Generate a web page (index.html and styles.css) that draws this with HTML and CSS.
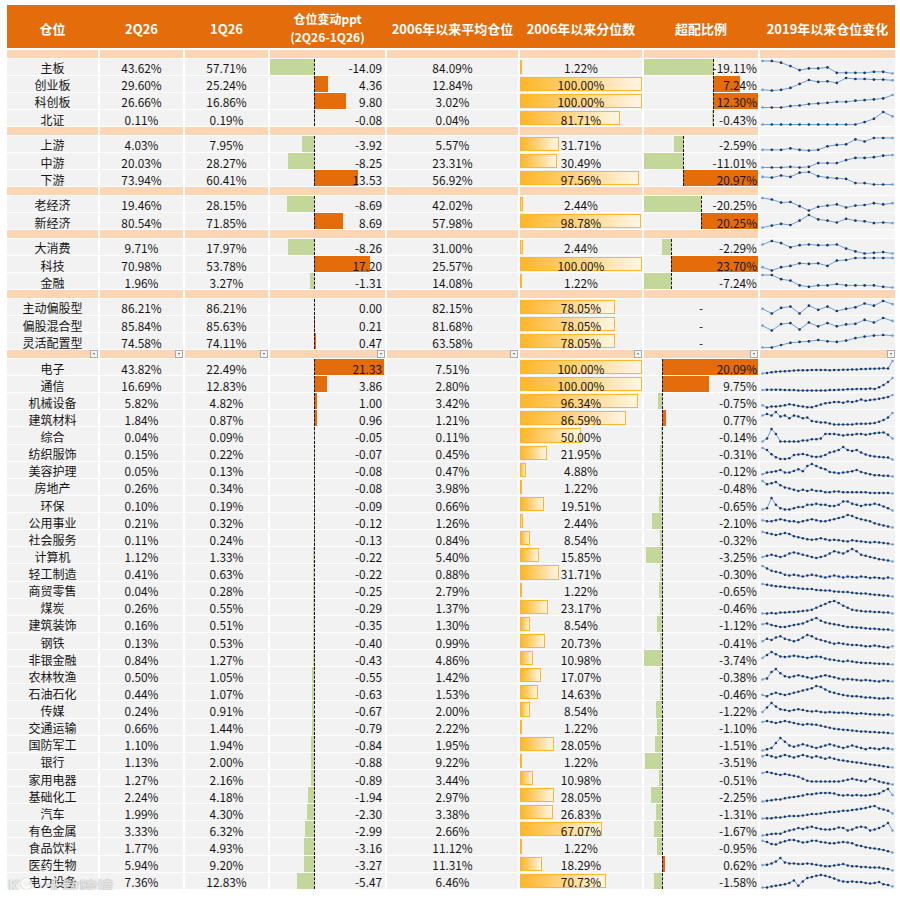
FILE: index.html
```html
<!DOCTYPE html>
<html lang="zh-CN">
<head>
<meta charset="utf-8">
<title>仓位</title>
<link rel="stylesheet" href="styles.css">
</head>
<body>
<div class="sheet">
  <div class="head">
    <div class="h">仓位</div>
    <div class="h">2Q26</div>
    <div class="h">1Q26</div>
    <div class="h two"><span>仓位变动ppt</span><span>(2Q26-1Q26)</span></div>
    <div class="h">2006年以来平均仓位</div>
    <div class="h">2006年以来分位数</div>
    <div class="h">超配比例</div>
    <div class="h">2019年以来仓位变化</div>
  </div>

  <div class="band"><div></div><div></div><div></div><div></div><div></div><div></div><div></div><div></div></div>
  <div class="grp">
    <div class="row"><div class="c nm">主板</div><div class="c">43.62%</div><div class="c">57.71%</div><div class="c chg"><span>-14.09</span></div><div class="c">84.09%</div><div class="c pct"><span>1.22%</span></div><div class="c ow"><span>-19.11%</span></div><div class="c sp" data-v="42,42,37,27,15,20,20,23,7,7,7,7,10,10,5"></div></div>
    <div class="row"><div class="c nm">创业板</div><div class="c">29.60%</div><div class="c">25.24%</div><div class="c chg"><span>4.36</span></div><div class="c">12.84%</div><div class="c pct"><span>100.00%</span></div><div class="c ow"><span>7.24%</span></div><div class="c sp" data-v="7,5,7,13,25,37,31,33,28,43,40,40,38,38,36"></div></div>
    <div class="row"><div class="c nm">科创板</div><div class="c">26.66%</div><div class="c">16.86%</div><div class="c chg"><span>9.80</span></div><div class="c">3.02%</div><div class="c pct"><span>100.00%</span></div><div class="c ow"><span>12.30%</span></div><div class="c sp" data-v="8,8,8,12,14,18,20,22,25,25,28,30,32,35,45"></div></div>
    <div class="row"><div class="c nm">北证</div><div class="c">0.11%</div><div class="c">0.19%</div><div class="c chg"><span>-0.08</span></div><div class="c">0.04%</div><div class="c pct"><span>81.71%</span></div><div class="c ow"><span>-0.43%</span></div><div class="c sp" data-v="0,0,0,0,0,0,0,0,0,0,0,7,17,37,24"></div></div>
  </div>

  <div class="band"><div></div><div></div><div></div><div></div><div></div><div></div><div></div><div class="lt"></div></div>
  <div class="grp">
    <div class="row"><div class="c nm">上游</div><div class="c">4.03%</div><div class="c">7.95%</div><div class="c chg"><span>-3.92</span></div><div class="c">5.57%</div><div class="c pct"><span>31.71%</span></div><div class="c ow"><span>-2.59%</span></div><div class="c sp" data-v="0,0,0,1,0,-0.5,0,2.5,3.5,4,7.5,6,8.5,8.5,8.5"></div></div>
    <div class="row"><div class="c nm">中游</div><div class="c">20.03%</div><div class="c">28.27%</div><div class="c chg"><span>-8.25</span></div><div class="c">23.31%</div><div class="c pct"><span>30.49%</span></div><div class="c ow"><span>-11.01%</span></div><div class="c sp" data-v="0,0,0,0.5,0,0.5,3,3,3,5,6.5,6.5,7,8,8.5"></div></div>
    <div class="row"><div class="c nm">下游</div><div class="c">73.94%</div><div class="c">60.41%</div><div class="c chg"><span>13.53</span></div><div class="c">56.92%</div><div class="c pct"><span>97.56%</span></div><div class="c ow"><span>20.97%</span></div><div class="c sp" data-v="7,6.5,8,7,10,10.5,7.5,6.5,6,5.5,2.5,2.5,1.5,1.5,1.5"></div></div>
  </div>

  <div class="band"><div></div><div></div><div></div><div></div><div></div><div></div><div></div><div class="lt"></div></div>
  <div class="grp">
    <div class="row"><div class="c nm">老经济</div><div class="c">19.46%</div><div class="c">28.15%</div><div class="c chg"><span>-8.69</span></div><div class="c">42.02%</div><div class="c pct"><span>2.44%</span></div><div class="c ow"><span>-20.25%</span></div><div class="c sp" data-v="47,42,32,34,20,6,18,22,26,16,22,24,30,26,30"></div></div>
    <div class="row"><div class="c nm">新经济</div><div class="c">80.54%</div><div class="c">71.85%</div><div class="c chg"><span>8.69</span></div><div class="c">57.98%</div><div class="c pct"><span>98.78%</span></div><div class="c ow"><span>20.25%</span></div><div class="c sp" data-v="2,8,14,10,24,42,28,24,18,30,24,22,16,18,16"></div></div>
  </div>

  <div class="band"><div></div><div></div><div></div><div></div><div></div><div></div><div></div><div class="lt"></div></div>
  <div class="grp">
    <div class="row"><div class="c nm">大消费</div><div class="c">9.71%</div><div class="c">17.97%</div><div class="c chg"><span>-8.26</span></div><div class="c">31.00%</div><div class="c pct"><span>2.44%</span></div><div class="c ow"><span>-2.29%</span></div><div class="c sp" data-v="28,38,32,20,26,28,26,26,28,16,8,2,4,6,2"></div></div>
    <div class="row"><div class="c nm">科技</div><div class="c">70.98%</div><div class="c">53.78%</div><div class="c chg"><span>17.20</span></div><div class="c">25.57%</div><div class="c pct"><span>100.00%</span></div><div class="c ow"><span>23.70%</span></div><div class="c sp" data-v="20,10,20,24,32,30,32,24,40,42,48,48,48,48,48"></div></div>
    <div class="row"><div class="c nm">金融</div><div class="c">1.96%</div><div class="c">3.27%</div><div class="c chg"><span>-1.31</span></div><div class="c">14.08%</div><div class="c pct"><span>1.22%</span></div><div class="c ow"><span>-7.24%</span></div><div class="c sp" data-v="36,36,24,20,6,2,6,6,10,6,6,6,6,2,0"></div></div>
  </div>

  <div class="band"><div></div><div></div><div></div><div></div><div></div><div></div><div></div><div></div></div>
  <div class="grp">
    <div class="row"><div class="c nm">主动偏股型</div><div class="c">86.21%</div><div class="c">86.21%</div><div class="c chg"><span>0.00</span></div><div class="c">82.15%</div><div class="c pct"><span>78.05%</span></div><div class="c ow dash"><span>-</span></div><div class="c sp" data-v="25,10,28,32,10,35,22,32,18,25,30,42,35,50,40"></div></div>
    <div class="row"><div class="c nm">偏股混合型</div><div class="c">85.84%</div><div class="c">85.63%</div><div class="c chg"><span>0.21</span></div><div class="c">81.68%</div><div class="c pct"><span>78.05%</span></div><div class="c ow dash"><span>-</span></div><div class="c sp" data-v="20,5,25,28,8,30,18,28,18,24,26,38,30,44,35"></div></div>
    <div class="row"><div class="c nm">灵活配置型</div><div class="c">74.58%</div><div class="c">74.11%</div><div class="c chg"><span>0.47</span></div><div class="c">63.58%</div><div class="c pct"><span>78.05%</span></div><div class="c ow dash"><span>-</span></div><div class="c sp" data-v="0,0,8,15,18,20,24,20,18,22,30,35,38,40,38"></div></div>
  </div>

  <div class="band dds"><div><b class="dd"></b></div><div><b class="dd"></b></div><div><b class="dd"></b></div><div><b class="dd"></b></div><div><b class="dd"></b></div><div><b class="dd"></b></div><div><b class="dd"></b></div><div><b class="dd"></b></div></div>
  <div class="grp">
    <div class="row"><div class="c nm">电子</div><div class="c">43.82%</div><div class="c">22.49%</div><div class="c chg"><span>21.33</span></div><div class="c">7.51%</div><div class="c pct"><span>100.00%</span></div><div class="c ow"><span>20.09%</span></div><div class="c sp" data-v="2,4,6,8,9,10,11,12,13,13,13,14,14,14,14,13,14,14,15,15,16,16,17,17,18,18,19,20,19,45"></div></div>
    <div class="row"><div class="c nm">通信</div><div class="c">16.69%</div><div class="c">12.83%</div><div class="c chg"><span>3.86</span></div><div class="c">2.80%</div><div class="c pct"><span>100.00%</span></div><div class="c ow"><span>9.75%</span></div><div class="c sp" data-v="5,6,6,6,6,5,5,5,4,4,4,4,4,4,4,5,5,6,6,7,7,8,8,8,9,8,12,18,25,35"></div></div>
    <div class="row"><div class="c nm">机械设备</div><div class="c">5.82%</div><div class="c">4.82%</div><div class="c chg"><span>1.00</span></div><div class="c">3.42%</div><div class="c pct"><span>96.34%</span></div><div class="c ow"><span>-0.75%</span></div><div class="c sp" data-v="12,5,8,8,10,12,15,13,10,8,6,6,10,14,18,20,22,22,20,24,22,25,30,26,28,30,32,35,38,44"></div></div>
    <div class="row"><div class="c nm">建筑材料</div><div class="c">1.84%</div><div class="c">0.87%</div><div class="c chg"><span>0.96</span></div><div class="c">1.21%</div><div class="c pct"><span>86.59%</span></div><div class="c ow"><span>0.77%</span></div><div class="c sp" data-v="28,32,28,38,25,28,20,28,25,20,22,12,10,8,8,5,2,2,2,2,2,4,4,4,5,6,10,15,22,35"></div></div>
    <div class="row"><div class="c nm">综合</div><div class="c">0.04%</div><div class="c">0.09%</div><div class="c chg"><span>-0.05</span></div><div class="c">0.11%</div><div class="c pct"><span>50.00%</span></div><div class="c ow"><span>-0.14%</span></div><div class="c sp" data-v="2,10,35,22,2,2,2,2,2,5,5,8,8,10,22,22,22,20,18,20,20,22,22,20,22,24,25,26,20,10"></div></div>
    <div class="row"><div class="c nm">纺织服饰</div><div class="c">0.15%</div><div class="c">0.22%</div><div class="c chg"><span>-0.07</span></div><div class="c">0.45%</div><div class="c pct"><span>21.95%</span></div><div class="c ow"><span>-0.31%</span></div><div class="c sp" data-v="40,33,20,10,5,5,7,17,19,21,17,13,11,13,17,25,29,33,43,33,30,33,25,19,15,13,11,10,9,3"></div></div>
    <div class="row"><div class="c nm">美容护理</div><div class="c">0.05%</div><div class="c">0.13%</div><div class="c chg"><span>-0.08</span></div><div class="c">0.47%</div><div class="c pct"><span>4.88%</span></div><div class="c ow"><span>-0.12%</span></div><div class="c sp" data-v="10,15,17,19,23,15,15,20,25,19,35,41,35,29,25,17,15,13,15,17,19,23,17,13,10,7,7,5,5,3"></div></div>
    <div class="row"><div class="c nm">房地产</div><div class="c">0.26%</div><div class="c">0.34%</div><div class="c chg"><span>-0.08</span></div><div class="c">3.98%</div><div class="c pct"><span>1.22%</span></div><div class="c ow"><span>-0.48%</span></div><div class="c sp" data-v="40,30,33,37,27,20,17,13,9,13,9,13,9,9,5,5,7,7,5,5,5,5,5,5,3,3,3,3,3,1"></div></div>
    <div class="row"><div class="c nm">环保</div><div class="c">0.10%</div><div class="c">0.19%</div><div class="c chg"><span>-0.09</span></div><div class="c">0.66%</div><div class="c pct"><span>19.51%</span></div><div class="c ow"><span>-0.65%</span></div><div class="c sp" data-v="10,12,30,18,12,10,10,12,14,14,18,18,20,18,18,16,16,18,24,24,20,18,16,18,18,20,18,15,12,8"></div></div>
    <div class="row"><div class="c nm">公用事业</div><div class="c">0.21%</div><div class="c">0.32%</div><div class="c chg"><span>-0.12</span></div><div class="c">1.26%</div><div class="c pct"><span>2.44%</span></div><div class="c ow"><span>-2.10%</span></div><div class="c sp" data-v="20,18,18,20,22,20,18,18,16,18,20,22,20,18,18,20,22,24,26,30,28,24,22,20,18,14,12,10,8,6"></div></div>
    <div class="row"><div class="c nm">社会服务</div><div class="c">0.11%</div><div class="c">0.24%</div><div class="c chg"><span>-0.13</span></div><div class="c">0.84%</div><div class="c pct"><span>8.54%</span></div><div class="c ow"><span>-0.32%</span></div><div class="c sp" data-v="30,28,26,24,26,28,26,22,20,18,16,15,16,18,16,14,15,14,13,12,14,13,12,11,10,11,10,9,8,6"></div></div>
    <div class="row"><div class="c nm">计算机</div><div class="c">1.12%</div><div class="c">1.33%</div><div class="c chg"><span>-0.22</span></div><div class="c">5.40%</div><div class="c pct"><span>15.85%</span></div><div class="c ow"><span>-3.25%</span></div><div class="c sp" data-v="20,22,24,22,20,22,26,28,26,24,22,20,18,20,22,26,30,28,26,30,34,30,24,22,20,18,16,15,14,12"></div></div>
    <div class="row"><div class="c nm">轻工制造</div><div class="c">0.41%</div><div class="c">0.63%</div><div class="c chg"><span>-0.22</span></div><div class="c">0.88%</div><div class="c pct"><span>31.71%</span></div><div class="c ow"><span>-0.30%</span></div><div class="c sp" data-v="40,35,30,28,26,22,20,22,20,18,20,22,20,18,16,18,20,18,16,18,17,16,18,17,15,16,15,14,16,14"></div></div>
    <div class="row"><div class="c nm">商贸零售</div><div class="c">0.04%</div><div class="c">0.28%</div><div class="c chg"><span>-0.25</span></div><div class="c">2.79%</div><div class="c pct"><span>1.22%</span></div><div class="c ow"><span>-0.65%</span></div><div class="c sp" data-v="40,38,36,34,33,32,30,30,28,27,26,26,24,23,22,22,20,19,18,18,16,15,14,14,12,11,10,9,8,6"></div></div>
    <div class="row"><div class="c nm">煤炭</div><div class="c">0.26%</div><div class="c">0.55%</div><div class="c chg"><span>-0.29</span></div><div class="c">1.37%</div><div class="c pct"><span>23.17%</span></div><div class="c ow"><span>-0.46%</span></div><div class="c sp" data-v="10,10,11,10,12,12,13,13,14,15,16,18,22,26,30,34,36,32,26,22,18,16,15,14,14,13,13,12,12,10"></div></div>
    <div class="row"><div class="c nm">建筑装饰</div><div class="c">0.16%</div><div class="c">0.51%</div><div class="c chg"><span>-0.35</span></div><div class="c">1.30%</div><div class="c pct"><span>8.54%</span></div><div class="c ow"><span>-1.12%</span></div><div class="c sp" data-v="22,24,20,18,16,16,18,20,22,24,28,32,36,30,26,24,22,20,18,16,16,15,14,13,12,12,11,10,10,8"></div></div>
    <div class="row"><div class="c nm">钢铁</div><div class="c">0.13%</div><div class="c">0.53%</div><div class="c chg"><span>-0.40</span></div><div class="c">0.99%</div><div class="c pct"><span>20.73%</span></div><div class="c ow"><span>-0.41%</span></div><div class="c sp" data-v="20,24,22,26,28,24,22,20,22,26,30,28,24,22,20,18,16,17,16,15,14,14,13,12,12,13,12,11,10,12"></div></div>
    <div class="row"><div class="c nm">非银金融</div><div class="c">0.84%</div><div class="c">1.27%</div><div class="c chg"><span>-0.43</span></div><div class="c">4.86%</div><div class="c pct"><span>10.98%</span></div><div class="c ow"><span>-3.74%</span></div><div class="c sp" data-v="22,30,38,32,26,24,26,28,26,24,22,24,26,24,20,18,16,14,12,14,12,10,9,8,8,7,6,6,5,4"></div></div>
    <div class="row"><div class="c nm">农林牧渔</div><div class="c">0.50%</div><div class="c">1.05%</div><div class="c chg"><span>-0.55</span></div><div class="c">1.42%</div><div class="c pct"><span>17.07%</span></div><div class="c ow"><span>-0.38%</span></div><div class="c sp" data-v="14,16,28,34,26,20,18,20,22,20,18,16,18,20,22,20,18,16,14,15,14,13,12,13,12,11,10,12,11,10"></div></div>
    <div class="row"><div class="c nm">石油石化</div><div class="c">0.44%</div><div class="c">1.07%</div><div class="c chg"><span>-0.63</span></div><div class="c">1.53%</div><div class="c pct"><span>14.63%</span></div><div class="c ow"><span>-0.46%</span></div><div class="c sp" data-v="16,14,18,20,18,16,18,20,22,24,26,28,32,30,26,22,20,18,16,15,14,14,13,12,12,11,10,10,11,10"></div></div>
    <div class="row"><div class="c nm">传媒</div><div class="c">0.24%</div><div class="c">0.91%</div><div class="c chg"><span>-0.67</span></div><div class="c">2.00%</div><div class="c pct"><span>8.54%</span></div><div class="c ow"><span>-1.22%</span></div><div class="c sp" data-v="16,26,36,28,22,20,18,20,22,20,18,17,18,16,15,16,15,14,15,14,13,12,13,12,11,10,10,9,10,8"></div></div>
    <div class="row"><div class="c nm">交通运输</div><div class="c">0.66%</div><div class="c">1.44%</div><div class="c chg"><span>-0.79</span></div><div class="c">2.22%</div><div class="c pct"><span>1.22%</span></div><div class="c ow"><span>-1.10%</span></div><div class="c sp" data-v="30,32,30,28,30,32,30,28,26,24,26,25,24,22,20,18,16,15,14,13,12,11,10,10,9,9,8,8,7,6"></div></div>
    <div class="row"><div class="c nm">国防军工</div><div class="c">1.10%</div><div class="c">1.94%</div><div class="c chg"><span>-0.84</span></div><div class="c">1.95%</div><div class="c pct"><span>28.05%</span></div><div class="c ow"><span>-1.51%</span></div><div class="c sp" data-v="14,16,18,26,34,28,22,20,22,24,22,20,18,20,22,24,22,20,18,20,22,20,18,16,18,17,16,18,17,16"></div></div>
    <div class="row"><div class="c nm">银行</div><div class="c">1.13%</div><div class="c">2.00%</div><div class="c chg"><span>-0.88</span></div><div class="c">9.22%</div><div class="c pct"><span>1.22%</span></div><div class="c ow"><span>-3.51%</span></div><div class="c sp" data-v="24,26,24,22,24,26,24,22,24,26,24,22,24,22,20,22,20,18,17,16,15,14,13,12,11,10,9,8,7,6"></div></div>
    <div class="row"><div class="c nm">家用电器</div><div class="c">1.27%</div><div class="c">2.16%</div><div class="c chg"><span>-0.89</span></div><div class="c">3.44%</div><div class="c pct"><span>10.98%</span></div><div class="c ow"><span>-0.51%</span></div><div class="c sp" data-v="26,28,26,24,22,24,22,20,18,14,10,8,8,8,8,8,8,8,10,12,14,12,10,8,14,12,8,6,4,2"></div></div>
    <div class="row"><div class="c nm">基础化工</div><div class="c">2.24%</div><div class="c">4.18%</div><div class="c chg"><span>-1.94</span></div><div class="c">2.97%</div><div class="c pct"><span>28.05%</span></div><div class="c ow"><span>-2.25%</span></div><div class="c sp" data-v="8,10,12,14,14,18,20,22,24,26,30,30,32,34,34,34,32,28,26,28,26,28,26,26,28,30,32,40,46,28"></div></div>
    <div class="row"><div class="c nm">汽车</div><div class="c">1.99%</div><div class="c">4.30%</div><div class="c chg"><span>-2.30</span></div><div class="c">3.38%</div><div class="c pct"><span>26.83%</span></div><div class="c ow"><span>-1.31%</span></div><div class="c sp" data-v="5,6,6,8,8,10,12,12,12,14,16,18,18,20,22,24,24,26,28,28,30,32,34,36,40,42,35,32,28,20"></div></div>
    <div class="row"><div class="c nm">有色金属</div><div class="c">3.33%</div><div class="c">6.32%</div><div class="c chg"><span>-2.99</span></div><div class="c">2.66%</div><div class="c pct"><span>67.07%</span></div><div class="c ow"><span>-1.67%</span></div><div class="c sp" data-v="6,8,10,11,11,16,20,22,26,24,28,30,26,24,22,22,24,28,26,20,22,28,30,28,20,22,26,32,40,20"></div></div>
    <div class="row"><div class="c nm">食品饮料</div><div class="c">1.77%</div><div class="c">4.93%</div><div class="c chg"><span>-3.16</span></div><div class="c">11.12%</div><div class="c pct"><span>1.22%</span></div><div class="c ow"><span>-0.95%</span></div><div class="c sp" data-v="36,32,26,24,30,34,38,38,34,30,32,36,36,32,30,28,28,30,32,30,28,22,20,16,14,12,10,8,4,0"></div></div>
    <div class="row"><div class="c nm">医药生物</div><div class="c">5.94%</div><div class="c">9.20%</div><div class="c chg"><span>-3.27</span></div><div class="c">11.31%</div><div class="c pct"><span>18.29%</span></div><div class="c ow"><span>0.62%</span></div><div class="c sp" data-v="15,16,20,25,35,22,20,20,18,18,20,18,16,14,12,12,14,16,18,14,12,12,10,10,8,8,8,6,4,0"></div></div>
    <div class="row"><div class="c nm">电力设备</div><div class="c">7.36%</div><div class="c">12.83%</div><div class="c chg"><span>-5.47</span></div><div class="c">6.46%</div><div class="c pct"><span>70.73%</span></div><div class="c ow"><span>-1.58%</span></div><div class="c sp" data-v="0,0,3,5,7,9,13,20,5,17,27,29,33,35,33,29,25,20,17,15,17,15,15,13,11,13,15,9,7,3"></div></div>
  </div>

  <div class="wm" aria-hidden="true">
    <span class="wm-logo"><span class="wm-k">K</span><span class="wm-o"></span></span>
    <span class="wm-t">大数跨境</span>
  </div>
</div>
<script src="app.js"></script>
</body>
</html>
```

FILE: styles.css
```css
* { box-sizing: border-box; }

body {
  margin: 0;
  background: #ffffff;
  font-family: "Noto Sans CJK SC", "Noto Sans", sans-serif;
  color: #161616;
}

.sheet {
  position: relative;
  width: 900px;
  padding: 5px 0 0 7px;
}

.head,
.band,
.row {
  display: grid;
  grid-template-columns: 91px 83px 83px 115px 131px 122px 114px 135px;
  column-gap: 2px;
  width: 888px;
}

.head {
  height: 43.3px;
  background: #e46c0a;
  margin-bottom: 1.6px;
}

.h {
  display: flex;
  align-items: center;
  justify-content: center;
  text-align: center;
  padding-top: 4px;
  color: #ffffff;
  font-weight: 700;
  font-size: 13px;
  line-height: 16px;
  white-space: nowrap;
}

.h.two {
  flex-direction: column;
  padding-top: 2px;
  font-size: 12px;
  line-height: 17.5px;
}

.band {
  height: 7.7px;
  margin-bottom: 1px;
}

.band > div {
  background: #fcd5b4;
}

.band > div.lt {
  background: #f5f5f5;
}

.dds > div {
  display: flex;
  justify-content: flex-end;
  align-items: center;
}

.dd {
  position: relative;
  width: 8px;
  height: 7.7px;
  background: #f6f6f6;
  border: 1px solid #a9a9a9;
}

.dd::after {
  content: "";
  position: absolute;
  left: 1.5px;
  top: 2px;
  border-left: 1.5px solid transparent;
  border-right: 1.5px solid transparent;
  border-top: 2px solid #555555;
}

.row {
  height: 16.14px;
  margin-bottom: 1px;
}

.c {
  position: relative;
  display: flex;
  align-items: flex-end;
  justify-content: center;
  background: #f2f2f2;
  font-size: 11.8px;
  line-height: 12.5px;
  white-space: nowrap;
}

.c > span {
  position: relative;
  z-index: 1;
}

.nm {
  font-size: 12px;
}

.chg {
  justify-content: flex-end;
  padding-right: 3px;
}

.ow {
  justify-content: flex-end;
  padding-right: 1px;
}

.ow.dash {
  justify-content: center;
  padding-right: 0;
}

.sp {
  display: block;
}

.bar {
  position: absolute;
  top: 0;
  bottom: 0;
}

.bar.pos { background: #e46c0a; }
.bar.neg { background: #c4d79b; }

.axis {
  position: absolute;
  top: 0;
  bottom: 0;
  width: 0;
  border-left: 1px dashed #111111;
  z-index: 2;
}

.pb {
  position: absolute;
  left: 0;
  top: 1px;
  bottom: 1px;
  border: 1px solid #ffb628;
  background: linear-gradient(90deg, #ffb628 0%, #ffd27a 45%, #fff6e6 100%);
}

.spk {
  display: block;
}

.spk polyline {
  fill: none;
  stroke: #6d9fd6;
  stroke-width: 1;
}

.spk circle {
  fill: #1f3864;
}

.spk circle.end {
  fill: #6d9fd6;
}

.wm {
  position: absolute;
  left: 8px;
  top: 874px;
  display: flex;
  align-items: center;
  gap: 14px;
  pointer-events: none;
  z-index: 5;
}

.wm-logo {
  display: flex;
  align-items: center;
  gap: 1px;
}

.wm-k {
  font-family: "DejaVu Sans", sans-serif;
  font-weight: 700;
  font-size: 15px;
  color: rgba(255, 255, 255, 0.85);
  text-shadow: 0 0 1px rgba(0, 0, 0, 0.55);
}

.wm-o {
  width: 11px;
  height: 11px;
  border-radius: 50%;
  border: 2px solid rgba(255, 255, 255, 0.85);
  box-shadow: 0 0 1px rgba(0, 0, 0, 0.5);
  margin-top: -6px;
}

.wm-t {
  font-size: 17px;
  font-weight: 700;
  color: rgba(255, 255, 255, 0.78);
  text-shadow: 0 0 1px rgba(0, 0, 0, 0.5);
}
```

FILE: app.js
```js
(function () {
  function num(el) {
    var t = el.textContent.trim();
    if (t === '-' || t === '') return null;
    return parseFloat(t.replace('%', ''));
  }
  function mk(cls, css) {
    var e = document.createElement('i');
    e.className = cls;
    for (var k in css) e.style[k] = css[k];
    return e;
  }

  // 仓位变动: one rule across the whole column
  var chg = [].slice.call(document.querySelectorAll('.chg'));
  var cmax = 0, cmin = 0;
  chg.forEach(function (c) {
    var v = num(c);
    if (v > cmax) cmax = v;
    if (v < cmin) cmin = v;
  });
  chg.forEach(function (c) {
    var v = num(c), W = c.clientWidth, ax = 44;
    if (v > 0) {
      c.insertBefore(mk('bar pos', { left: ax + 'px', width: (v / cmax * (W - ax - 1)) + 'px' }), c.firstChild);
    } else if (v < 0) {
      var w = v / cmin * ax;
      c.insertBefore(mk('bar neg', { left: (ax - w) + 'px', width: w + 'px' }), c.firstChild);
    }
    c.appendChild(mk('axis', { left: ax + 'px' }));
  });

  // 超配比例: one rule per group
  [].forEach.call(document.querySelectorAll('.grp'), function (g) {
    var cells = [].slice.call(g.querySelectorAll('.ow'));
    var vals = cells.map(num);
    var nums = vals.filter(function (v) { return v !== null; });
    if (!nums.length) return;
    var mn = Math.min(0, Math.min.apply(null, nums));
    var mx = Math.max(0, Math.max.apply(null, nums));
    cells.forEach(function (c, i) {
      var v = vals[i], W = c.clientWidth, s = W / (mx - mn), ax = -mn * s;
      if (v > 0) {
        c.insertBefore(mk('bar pos', { left: ax + 'px', width: (v * s) + 'px' }), c.firstChild);
      } else if (v < 0) {
        c.insertBefore(mk('bar neg', { left: (ax + v * s) + 'px', width: (-v * s) + 'px' }), c.firstChild);
      }
      c.appendChild(mk('axis', { left: Math.round(ax) + 'px' }));
    });
  });

  // 分位数: gradient bars
  [].forEach.call(document.querySelectorAll('.pct'), function (c) {
    var v = num(c), W = c.clientWidth;
    c.insertBefore(mk('pb', { width: Math.max(2, v / 100 * W) + 'px' }), c.firstChild);
  });

  // sparklines
  var ns = 'http://www.w3.org/2000/svg';
  [].forEach.call(document.querySelectorAll('.sp'), function (c) {
    var v = c.getAttribute('data-v').split(',').map(Number);
    var W = c.clientWidth, H = c.clientHeight;
    var mn = Math.min.apply(null, v), mx = Math.max.apply(null, v), r = (mx - mn) || 1;
    var x0 = 2.5, x1 = W - 2.5, y0 = 2, y1 = H - 1.5;
    var pts = v.map(function (d, i) {
      return [x0 + (x1 - x0) * i / (v.length - 1), y1 - (y1 - y0) * (d - mn) / r];
    });
    var svg = document.createElementNS(ns, 'svg');
    svg.setAttribute('width', W);
    svg.setAttribute('height', H);
    svg.setAttribute('class', 'spk');
    var pl = document.createElementNS(ns, 'polyline');
    pl.setAttribute('points', pts.map(function (p) { return p[0].toFixed(1) + ',' + p[1].toFixed(1); }).join(' '));
    svg.appendChild(pl);
    pts.forEach(function (p, i) {
      var ci = document.createElementNS(ns, 'circle');
      ci.setAttribute('cx', p[0].toFixed(1));
      ci.setAttribute('cy', p[1].toFixed(1));
      ci.setAttribute('r', v.length > 20 ? 1.25 : 1.35);
      if (i === 0 || i === pts.length - 1) ci.setAttribute('class', 'end');
      svg.appendChild(ci);
    });
    c.appendChild(svg);
  });
})();
```
